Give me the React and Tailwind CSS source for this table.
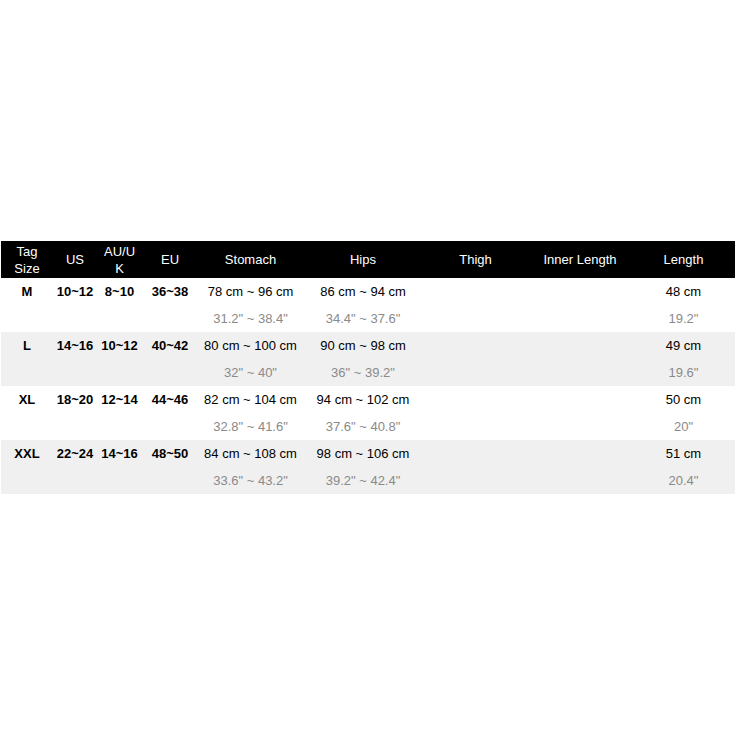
const COLS = "grid grid-cols-[52px_44px_45px_56px_105px_120px_105px_104px_103px]";

const headers = [
  ["Tag", "Size"],
  ["US"],
  ["AU/U", "K"],
  ["EU"],
  ["Stomach"],
  ["Hips"],
  ["Thigh"],
  ["Inner Length"],
  ["Length"],
];

const rows = [
  {
    size: "M",
    us: "10~12",
    au: "8~10",
    eu: "36~38",
    stomach: ["78 cm ~ 96 cm", "31.2\" ~ 38.4\""],
    hips: ["86 cm ~ 94 cm", "34.4\" ~ 37.6\""],
    length: ["48 cm", "19.2\""],
  },
  {
    size: "L",
    us: "14~16",
    au: "10~12",
    eu: "40~42",
    stomach: ["80 cm ~ 100 cm", "32\" ~ 40\""],
    hips: ["90 cm ~ 98 cm", "36\" ~ 39.2\""],
    length: ["49 cm", "19.6\""],
  },
  {
    size: "XL",
    us: "18~20",
    au: "12~14",
    eu: "44~46",
    stomach: ["82 cm ~ 104 cm", "32.8\" ~ 41.6\""],
    hips: ["94 cm ~ 102 cm", "37.6\" ~ 40.8\""],
    length: ["50 cm", "20\""],
  },
  {
    size: "XXL",
    us: "22~24",
    au: "14~16",
    eu: "48~50",
    stomach: ["84 cm ~ 108 cm", "33.6\" ~ 43.2\""],
    hips: ["98 cm ~ 106 cm", "39.2\" ~ 42.4\""],
    length: ["51 cm", "20.4\""],
  },
];

function BoldCell({ children }) {
  return (
    <div className="text-center font-bold leading-[27px] text-black">
      {children}
    </div>
  );
}

function MeasureCell({ value }) {
  if (!value) return <div />;
  return (
    <div className="flex flex-col items-center">
      <span className="leading-[27px] text-black whitespace-nowrap">{value[0]}</span>
      <span className="leading-[27px] text-[#8a8a8a] whitespace-nowrap">{value[1]}</span>
    </div>
  );
}

export default function App() {
  return (
    <div
      className="h-[735px] w-[735px] bg-white pt-[241px] pl-px text-[13px] overflow-hidden"
      style={{ fontFamily: '"Liberation Sans", Arial, sans-serif' }}
    >
      <div className="w-[734px]">
        <div className={`${COLS} h-[37px] bg-black text-white`}>
          {headers.map((lines, i) => (
            <div
              key={i}
              className="flex flex-col items-center justify-center leading-[17px] text-center"
            >
              {lines.map((l) => (
                <span key={l}>{l}</span>
              ))}
            </div>
          ))}
        </div>

        {rows.map((r, i) => (
          <div
            key={r.size}
            className={`${COLS} h-[54px] ${i % 2 === 1 ? "bg-[#f0f0f0]" : "bg-white"}`}
          >
            <BoldCell>{r.size}</BoldCell>
            <BoldCell>{r.us}</BoldCell>
            <BoldCell>{r.au}</BoldCell>
            <BoldCell>{r.eu}</BoldCell>
            <MeasureCell value={r.stomach} />
            <MeasureCell value={r.hips} />
            <MeasureCell />
            <MeasureCell />
            <MeasureCell value={r.length} />
          </div>
        ))}
      </div>
    </div>
  );
}
